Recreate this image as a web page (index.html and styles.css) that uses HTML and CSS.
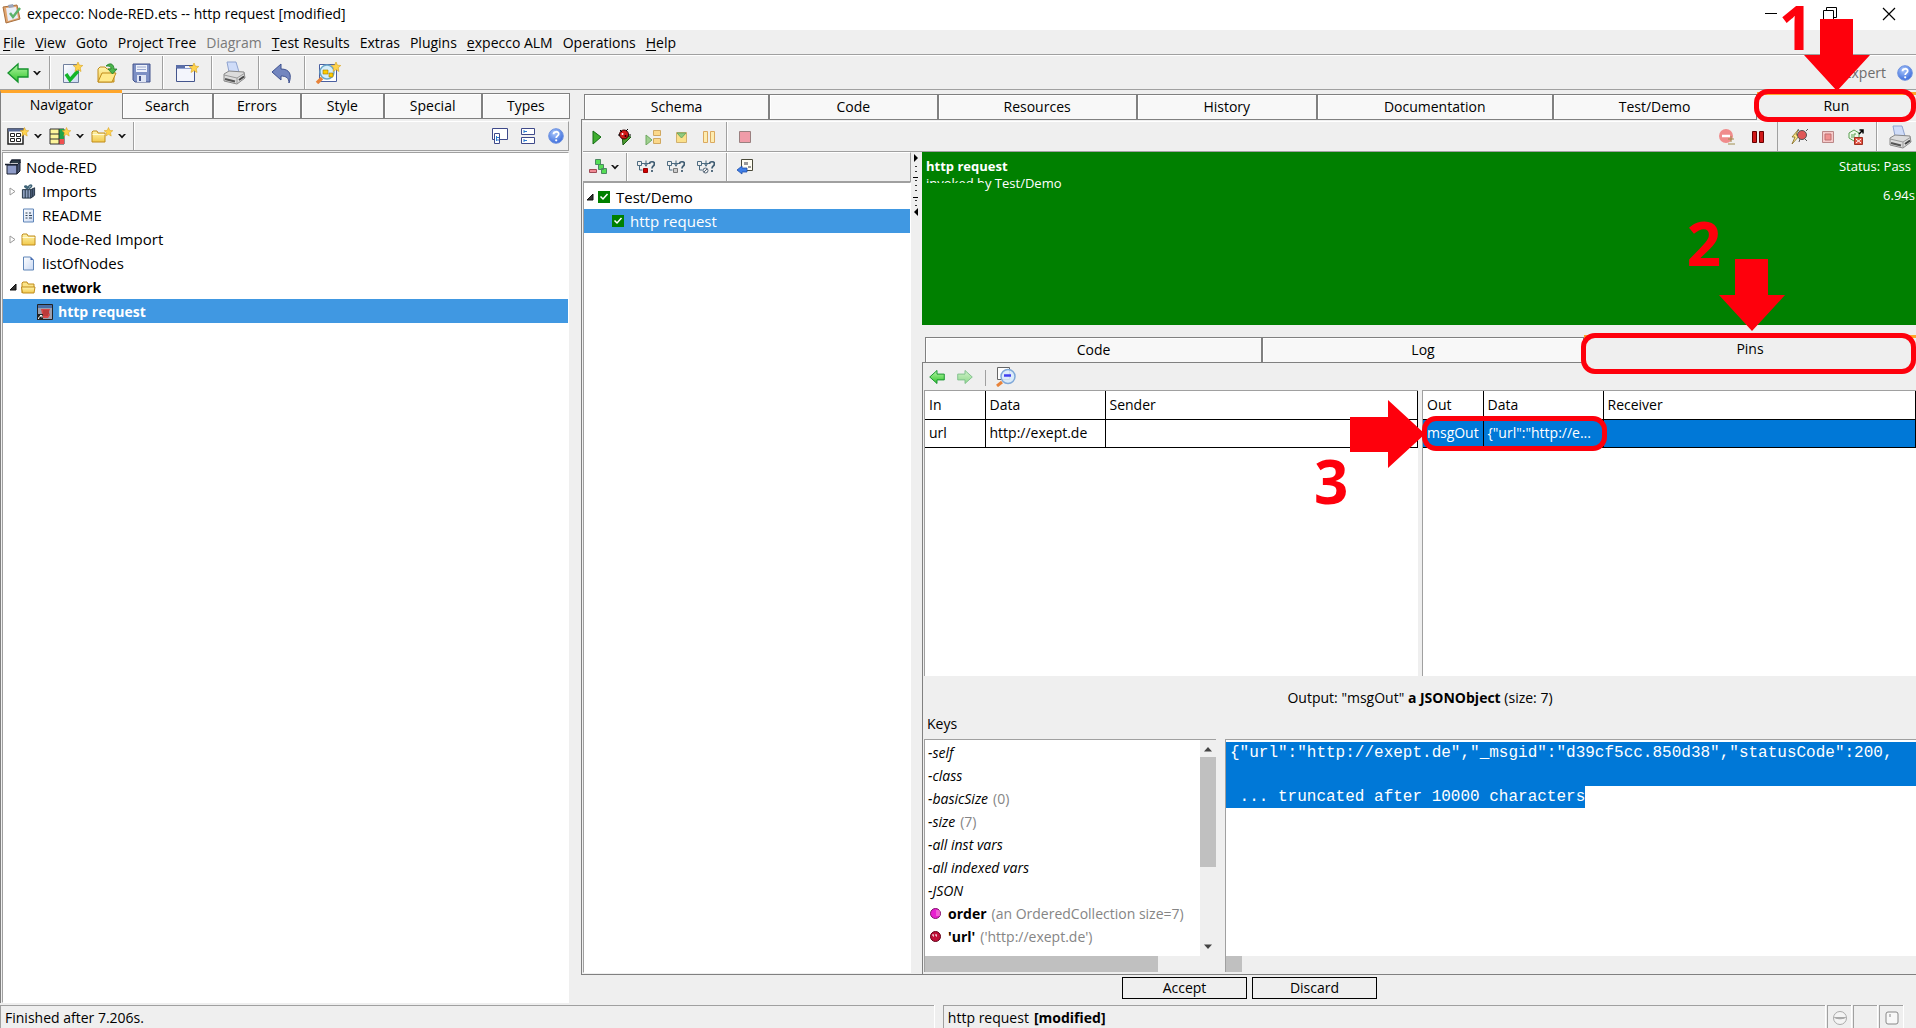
FILE: index.html
```html
<!DOCTYPE html>
<html lang="en">
<head>
<meta charset="utf-8">
<title>expecco: Node-RED.ets -- http request [modified]</title>
<link rel="stylesheet" href="styles.css">
</head>
<body>
<svg class="defs" aria-hidden="true">
  <defs>
    <linearGradient id="gGreen" x1="0" y1="0" x2="0" y2="1"><stop offset="0" stop-color="#b6f7a8"/><stop offset="1" stop-color="#2fc42a"/></linearGradient>
    <linearGradient id="gFolder" x1="0" y1="0" x2="0" y2="1"><stop offset="0" stop-color="#fff6b0"/><stop offset="1" stop-color="#f2c94c"/></linearGradient>
    <linearGradient id="gPage" x1="0" y1="0" x2="1" y2="1"><stop offset="0" stop-color="#ffffff"/><stop offset="1" stop-color="#c9d8f2"/></linearGradient>
    <radialGradient id="gHelp" cx=".4" cy=".3" r=".8"><stop offset="0" stop-color="#a9c6fb"/><stop offset="1" stop-color="#2f62d8"/></radialGradient>
    <symbol id="star" viewBox="0 0 10 10"><path d="M5 0l1.4 3.2 3.4.3-2.6 2.3.8 3.7L5 7.6 2 9.5l.8-3.7L.2 3.5l3.4-.3z" fill="#ffd34d" stroke="#d9a21b" stroke-width=".6"/></symbol>
    <symbol id="chev" viewBox="0 0 8 6"><path d="M0 1h2l2 2 2-2h2L4 5.500z" fill="#111"/></symbol>
    <symbol id="back" viewBox="0 0 22 20"><path d="M1 10L11 1v5h10v8H11v5z" fill="url(#gGreen)" stroke="#14922c" stroke-width="1.300"/></symbol>
    <symbol id="folder" viewBox="0 0 15 13"><path d="M1 12V2l1-1h4l1 2h7v9z" fill="url(#gFolder)" stroke="#c08c1c"/><path d="M1.500 4.500h12" stroke="#fffbd8"/></symbol>
    <symbol id="help" viewBox="0 0 16 16"><circle cx="8" cy="8" r="7.300" fill="url(#gHelp)" stroke="#6f93e0"/><path d="M5.500 6.200C5.500 3 10.700 3 10.700 6c0 1.900-2.500 1.900-2.500 4" fill="none" stroke="#fff" stroke-width="1.800"/><circle cx="8.200" cy="12.300" r="1.100" fill="#fff"/></symbol>
    <symbol id="printer" viewBox="0 0 24 24"><path d="M5 1h9l3 10H7z" fill="#cfdcf8" stroke="#8fa3cf"/><path d="M2 13l5-3 15 1 1 6-8 6-13-3z" fill="#dcdcdc" stroke="#888"/><path d="M2 14l13 3v5M15 17l8-5" fill="none" stroke="#999"/><path d="M3 18l10 2.500" stroke="#555" stroke-width="2"/><path d="M17 19l5-3.500" stroke="#444" stroke-width="2"/></symbol>
    <symbol id="check" viewBox="0 0 12 12"><path d="M0 0h12v12H0z" fill="#008000"/><path d="M2.500 5.500L5 8l4.500-5" fill="none" stroke="#fff" stroke-width="1.500"/></symbol>
    <symbol id="treeq" viewBox="0 0 18 14"><path d="M.5 1.500h4v4h-4zM2.500 6v4h3M5 3.500h8M9 .5v6M7 3l2 3 2-3" fill="none" stroke="#4d6b80"/><path d="M12.500 4c0-3 5-3 5 0 0 2-2.500 2-2.500 4.500M15 10v2" fill="none" stroke="#3d5a70" stroke-width="1.700"/></symbol>
    <symbol id="up" viewBox="0 0 8 5"><path d="M0 4.500L4 0l4 4.500z" fill="#444"/></symbol>
  </defs>
</svg>

<header>
  <div class="titlebar">
    <svg class="i20" viewBox="0 0 20 20"><path d="M1 3l14-2 3 14-14 4z" fill="#e2a56f" stroke="#a8703f"/><path d="M4 4l10-1 2 11-10 3z" fill="#e9eef8"/><path d="M6 1l5-1 1 3-5 1z" fill="#9aa5bb"/><path d="M8 9l3 4 7-9" fill="none" stroke="#5db36b" stroke-width="2.500"/></svg>
    <h1>expecco: Node-RED.ets -- http request [modified]</h1>
    <div class="winbtns">
      <button aria-label="Minimize"><svg viewBox="0 0 14 14"><path d="M1 6.500h12" stroke="#000"/></svg></button>
      <button aria-label="Restore"><svg viewBox="0 0 14 14"><path d="M.5 3.500h10v10H.5zM3.500 3V.5h10v10H11" fill="none" stroke="#000"/></svg></button>
      <button aria-label="Close"><svg viewBox="0 0 14 14"><path d="M1 1l12 12M13 1L1 13" stroke="#000" stroke-width="1.200"/></svg></button>
    </div>
  </div>
  <nav class="menubar">
    <button><u>F</u>ile</button><button><u>V</u>iew</button><button>Goto</button><button>Project Tree</button><button disabled>Diagram</button><button><u>T</u>est Results</button><button>Extras</button><button>Plugins</button><button><u>e</u>xpecco ALM</button><button>Operations</button><button><u>H</u>elp</button>
  </nav>
  <div class="toolbar main">
    <div class="grp g1"><button aria-label="Back"><svg class="i22"><use href="#back"/></svg></button><button aria-label="Back history"><svg class="chev"><use href="#chev"/></svg></button></div>
    <div class="grp g2">
      <button aria-label="New suite"><svg class="i22" viewBox="0 0 22 22"><path d="M2.500 2.500h15v18h-15z" fill="url(#gPage)" stroke="#70809f"/><path d="M5 12l4 6 8-9" fill="none" stroke="#12b52a" stroke-width="3.500"/><use href="#star" x="12" width="10" height="10"/></svg></button>
      <button aria-label="Open"><svg class="i22" viewBox="0 0 22 22"><path d="M2 20V7l2-2h5l2 2h7v13z" fill="url(#gFolder)" stroke="#c08c1c"/><path d="M2 20l4-9h14l-4 9z" fill="#ffe98a" stroke="#c08c1c"/><path d="M10 4c4-4 8-2 8 3h3l-4.500 5L12 7h3c0-3-2-3-5-3z" fill="#4cb54c" stroke="#1e7d2a" stroke-width=".8"/></svg></button>
      <button aria-label="Save"><svg class="i22" viewBox="0 0 22 22"><path d="M2 2h17v18H4l-2-2z" fill="#7d90c4" stroke="#44558d"/><path d="M5 3h11v7H5z" fill="#eef2fb"/><path d="M6 5h9M6 7.500h9" stroke="#9aa8cf"/><path d="M6 13h9v7H6z" fill="#dfe5f4"/><path d="M8 14h2v5H8z" fill="#44558d"/></svg></button>
    </div>
    <div class="grp g3"><button aria-label="New window"><svg class="i24" viewBox="0 0 24 22"><path d="M1.500 3.500h18v16h-18z" fill="#f3f5fc" stroke="#44558d"/><path d="M1 3h9v3H1z" fill="#5a6ea8"/><path d="M2 6.500h17" stroke="#8fa0cf"/><use href="#star" x="14" y="1" width="10" height="10"/></svg></button></div>
    <div class="grp g4"><button aria-label="Print"><svg class="i24"><use href="#printer"/></svg></button></div>
    <div class="grp g5"><button aria-label="Undo"><svg class="i22" viewBox="0 0 22 22"><path d="M1 10l9-8v5c9 0 11 6 8 14 0-5-3-7-8-7v4z" fill="#7386bf" stroke="#3f5290"/></svg></button></div>
    <div class="grp g6"><button aria-label="Find"><svg class="i26" viewBox="0 0 26 22"><path d="M4.500 2.500h17v17h-17z" fill="#fff" stroke="#4a5fa0"/><circle cx="12" cy="10" r="7" fill="#d5eefa" stroke="#6aa7c8" stroke-width="1.500"/><path d="M8 8h5v4H8zM14 11h4v4h-4z" fill="#ffcc00" stroke="#a07800" stroke-width=".6"/><path d="M7 16l-5 5" stroke="#e8833a" stroke-width="3.500"/><use href="#star" x="16" width="10" height="10"/></svg></button></div>
    <div class="expert"><span>Expert</span><button aria-label="Help"><svg class="i16"><use href="#help"/></svg></button></div>
  </div>
</header>

<main>
  <section class="left">
    <div class="tabs">
      <button class="tab on" style="flex-grow:123">Navigator</button><button class="tab" style="flex-grow:91">Search</button><button class="tab" style="flex-grow:88">Errors</button><button class="tab" style="flex-grow:82">Style</button><button class="tab" style="flex-grow:98">Special</button><button class="tab" style="flex-grow:88">Types</button>
    </div>
    <div class="navpage">
      <div class="toolbar sub">
        <div class="grp g7">
          <button aria-label="New block"><svg class="i24" viewBox="0 0 24 18"><path d="M1 2h15v15H1z" fill="#fff" stroke="#222" stroke-width="1.500"/><path d="M1 1.500h15v3H1z" fill="#5a6a94"/><path d="M3.500 6.500h4v3h-4zM9.500 6.500h4v3h-4zM3.500 11.500h4v3h-4zM9.500 11.500h4v3h-4z" fill="#fff" stroke="#222"/><use href="#star" x="13" width="9" height="10"/></svg></button><button aria-label="Block menu"><svg class="chev"><use href="#chev"/></svg></button>
          <button aria-label="New plan"><svg class="i24" viewBox="0 0 24 18"><path d="M1 2h14v15H1z" fill="#fdf59b" stroke="#333"/><path d="M10 2h5v10h-5z" fill="#1fa34a"/><path d="M10 12h5v5h-5z" fill="#f05050"/><path d="M1 7h9M1 12h9M10 2v15" stroke="#333"/><use href="#star" x="13" width="9" height="10"/></svg></button><button aria-label="Plan menu"><svg class="chev"><use href="#chev"/></svg></button>
          <button aria-label="New folder"><svg class="i24" viewBox="0 0 24 18"><use href="#folder" x="0" y="3" width="15" height="13"/><use href="#star" x="13" width="9" height="10"/></svg></button><button aria-label="Folder menu"><svg class="chev"><use href="#chev"/></svg></button>
        </div>
        <div class="endbtns">
          <button aria-label="Detach"><svg class="i16" viewBox="0 0 16 16"><path d="M.5.500h15v11H.5z" fill="#fff" stroke="#3f4a8a"/><path d="M2.500 5.500h5v10h-5z" fill="#fff" stroke="#3f4a8a"/><path d="M4.500 8v5M5 9.500h2M5 12h2" stroke="#2a7bd0"/></svg></button>
          <button aria-label="Split"><svg class="i16" viewBox="0 0 16 16"><path d="M1.500.5h13v6h-13zM1.500 9.500h13v6h-13z" fill="#fff" stroke="#3f4a8a"/><path d="M4 2v3M4 3.500h3M4 11v3M4 12.500h3" stroke="#2a7bd0"/></svg></button>
          <button aria-label="Navigator help"><svg class="i16"><use href="#help"/></svg></button>
        </div>
      </div>
      <ul class="tree">
        <li class="l0"><svg class="i16" viewBox="0 0 16 16"><path d="M2 6h10v9H2z" fill="#8f9cc8" stroke="#1c2333"/><path d="M12 6l3-3v9l-3 3z" fill="#46536e" stroke="#1c2333"/><path d="M0 5.500h13M5 4l2-3h8v3" fill="#2e3d46" stroke="#1c2333" stroke-width="1.500"/></svg>Node-RED</li>
        <li class="l1"><svg class="tog" viewBox="0 0 8 9"><path d="M1 1l5 3.500L1 8z" fill="#fff" stroke="#999"/></svg><svg class="i15" viewBox="0 0 15 16"><path d="M1 6h9v9H1z" fill="#8fa0c0" stroke="#1f3040"/><path d="M10 6l4-2v8l-4 3z" fill="#5d6d8d" stroke="#1f3040"/><path d="M4 6v9M7 6v9M12 5v9" stroke="#1f3040"/><path d="M7 5C1 3 4 0 7 4c2-5 7-3 1 1" fill="none" stroke="#3f6478" stroke-width="1.600"/></svg>Imports</li>
        <li class="l1"><i class="tog"></i><svg class="i15" viewBox="0 0 15 14"><path d="M2.500.5h10v13h-10z" fill="url(#gPage)" stroke="#5f85b8"/><path d="M4.500 4.500h2M8 4.500h2M4.500 7h2M8 7h3M4.500 9.500h2M8 9.500h3" stroke="#345"/></svg>README</li>
        <li class="l1"><svg class="tog" viewBox="0 0 8 9"><path d="M1 1l5 3.500L1 8z" fill="#fff" stroke="#999"/></svg><svg class="i15"><use href="#folder"/></svg>Node-Red Import</li>
        <li class="l1"><i class="tog"></i><svg class="i15" viewBox="0 0 15 14"><path d="M2.500.5h7l3 3v10h-10z" fill="url(#gPage)" stroke="#5f85b8"/><path d="M9.500.5v3h3z" fill="#3f66b0"/></svg>listOfNodes</li>
        <li class="l1 bold"><svg class="tog" viewBox="0 0 8 9"><path d="M7 1v6H1z" fill="#333" stroke="#111"/></svg><svg class="i15" viewBox="0 0 15 13"><path d="M1 12V2l1-1h4l1 2h6v3" fill="#fbe58a" stroke="#c08c1c"/><path d="M.5 6h13.500l-1 6H1.500z" fill="url(#gFolder)" stroke="#c08c1c"/></svg>network</li>
        <li class="l2 bold sel"><svg class="i16" viewBox="0 0 16 16"><path d="M.5.500h15v15H.5z" fill="#9a9fae" stroke="#222"/><path d="M1 1h14v3H1z" fill="#4a6ea5"/><path d="M4 5h9l-1 3 1 3-2 3H4l1-4z" fill="#d84848"/><path d="M6 7h6M6 9h6M6 11h5" stroke="#7a2020" stroke-width=".6"/><path d="M0 10h6v6H0z" fill="#222"/><path d="M1.500 15c0-2 1-2.500 3-3M3 11.500h2v2" fill="none" stroke="#fff"/></svg>http request</li>
      </ul>
    </div>
  </section>

  <section class="right">
    <div class="tabs rtabs">
      <button class="tab" style="flex-grow:185">Schema</button><button class="tab" style="flex-grow:168">Code</button><button class="tab" style="flex-grow:199">Resources</button><button class="tab" style="flex-grow:180">History</button><button class="tab" style="flex-grow:236">Documentation</button><button class="tab" style="flex-grow:204">Test/Demo</button>
      <div class="slot" style="flex-grow:161"><button class="tab on">Run</button>
        <span class="ring ring-run"></span><b class="num num-run">1</b>
        <svg class="arrow arrow-run" viewBox="0 0 66 72"><path d="M16 0h33v36h17L33 72 0 36h16z" fill="#fe000c"/></svg></div>
    </div>
    <div class="runpage">
      <div class="toolbar run">
        <div class="grp g8">
          <button aria-label="Run"><svg class="i16" viewBox="0 0 16 16"><path d="M4 2l8 6-8 7z" fill="#3fae2f" stroke="#126b12"/></svg></button>
          <button aria-label="Debug"><svg class="i16" viewBox="0 0 16 16"><path d="M5 6l9 2-8 8z" fill="#4a9b2f" stroke="#1c5a12"/><circle cx="7" cy="5.500" r="4.500" fill="#d01818" stroke="#300"/><path d="M3 1l2 2M11 0L9 2M1 6h2M11 6h3" stroke="#000"/><circle cx="5.500" cy="5" r="1" fill="#fff"/><circle cx="8.500" cy="7" r="1" fill="#200"/></svg></button>
          <button aria-label="Step" disabled><svg class="i16" viewBox="0 0 16 16"><path d="M1 6l6 5-6 5z" fill="#9fd08f" stroke="#6fa860"/><path d="M8.500 1.500h7v5h-7zM8.500 9.500h7v5h-7z" fill="#fbd88a" stroke="#d0a860"/></svg></button>
          <button aria-label="Step into" disabled><svg class="i16" viewBox="0 0 16 16"><path d="M3.500 3.500h10v10h-10z" fill="#fbe08a" stroke="#d0b070"/><path d="M4 4h9l-4.500 5z" fill="#8fca7f" stroke="#6fa860"/></svg></button>
          <button aria-label="Pause" disabled><svg class="i16" viewBox="0 0 16 16"><path d="M2.500 2.500h4v11h-4zM9.500 2.500h4v11h-4z" fill="#fdecb0" stroke="#dba95f"/></svg></button>
        </div>
        <button class="stop" aria-label="Stop" disabled><svg class="i16" viewBox="0 0 16 16"><path d="M2.500 2.500h11v11h-11z" fill="#f09ca8" stroke="#9a8080"/></svg></button>
        <div class="runend">
          <button aria-label="Remove breakpoints"><svg class="i18" viewBox="0 0 18 16"><circle cx="8" cy="7" r="7" fill="#f08c8c"/><path d="M4 7h8" stroke="#fff" stroke-width="2.500"/><path d="M10 10h6M13 7v6M10 15h7" stroke="#a09050"/></svg></button>
          <button aria-label="Break"><svg class="i16" viewBox="0 0 16 16"><path d="M2.500 2.500h4v11h-4zM9.500 2.500h4v11h-4z" fill="#d01818" stroke="#600"/></svg></button>
          <div class="grp g9">
            <button aria-label="Exception break"><svg class="i18" viewBox="0 0 18 16"><path d="M8 1L2 8h3l-3 7 8-9H6z" fill="#ffe98a" stroke="#806a20" stroke-width=".8"/><circle cx="12" cy="6" r="4.500" fill="#e05858" stroke="#555"/><path d="M9 2l-1-2M16 2l2-2M10 10l-1 3M15 10l2 2" stroke="#555"/></svg></button>
            <button aria-label="Halt"><svg class="i16" viewBox="0 0 16 16"><path d="M2.500 2.500h11v11h-11z" fill="#f6caca" stroke="#b88"/><path d="M5 5h6v6H5z" fill="#f09090" stroke="#c07070"/></svg></button>
            <button aria-label="Close connection"><svg class="i16" viewBox="0 0 16 16"><path d="M6 1l5 3v5l-5 3-5-3V4z" fill="#eef8ea" stroke="#58a050"/><path d="M4 5v4M8 5H6v4h2" fill="none" stroke="#58a050"/><path d="M6.500 8.500h8v7h-8z" fill="#e05040" stroke="#a03020"/><path d="M8 10l5 4M13 10l-5 4" stroke="#fff"/><path d="M11 5l4-4M11.500 1H15v3.500" fill="none" stroke="#000" stroke-width="1.500"/></svg></button>
          </div>
          <button class="print" aria-label="Print report"><svg class="i24"><use href="#printer"/></svg></button>
        </div>
      </div>
      <div class="runbody">
        <div class="steps">
          <div class="toolbar steptools">
            <div class="grp g10"><button aria-label="Collapse"><svg class="i18" viewBox="0 0 18 16"><path d="M.5 10.500h7v3h-7z" fill="#f08a94" stroke="#a04a55"/><path d="M6.500.5h5v5h-5zM9.500 5.500h5v5h-5zM12.500 9.500h5v5h-5z" fill="#55dd55" stroke="#4a8a60"/></svg></button><button aria-label="Collapse menu"><svg class="chev"><use href="#chev"/></svg></button></div>
            <div class="grp g11">
              <button aria-label="Find failed"><svg class="i18" viewBox="0 0 18 14"><use href="#treeq" width="18" height="14"/><path d="M6.500 8.500h4v4h-4z" fill="#d00000" stroke="#900"/></svg></button>
              <button aria-label="Find next"><svg class="i18" viewBox="0 0 18 14"><use href="#treeq" width="18" height="14"/><path d="M6.500 8.500h4v4h-4z" fill="#ccc" stroke="#777"/></svg></button>
              <button aria-label="Find skipped"><svg class="i18" viewBox="0 0 18 14"><use href="#treeq" width="18" height="14"/><circle cx="8.500" cy="10.500" r="2.500" fill="#eee" stroke="#567"/><path d="M7 12l3-3" stroke="#567"/></svg></button>
            </div>
            <button class="goto" aria-label="Show in editor"><svg class="i16" viewBox="0 0 16 16"><path d="M4.500.5h11v11h-11z" fill="#fffdf2" stroke="#4a4a3a"/><path d="M7 3h4v3H7zM11 7h3v2h-3z" fill="#999"/><path d="M0 11l5-4v2h5v4H5v2z" fill="#3f7fe8" stroke="#1f4fa8" stroke-width=".8"/></svg></button>
          </div>
          <ul class="tree">
            <li class="s0"><svg class="tog" viewBox="0 0 8 9"><path d="M7 1v6H1z" fill="#333" stroke="#111"/></svg><svg class="i12"><use href="#check"/></svg>Test/Demo</li>
            <li class="s1 sel"><svg class="i12"><use href="#check"/></svg>http request</li>
          </ul>
        </div>
        <div class="grip"><svg viewBox="0 0 6 64"><path d="M1 0v8l4-4zM5 54v8l-4-4z" fill="#000"/><path d="M3 12v8M3 26v14M3 46v8" stroke="#333" stroke-width="2" stroke-dasharray="1 4"/><path d="M0 23.500h5M0 43.500h5" stroke="#000"/></svg></div>
        <div class="detail">
          <div class="status">
            <div><b>http request</b><p><span class="cut">invoked b</span>y Test/Demo</p></div>
            <div class="result"><span>Status: Pass</span><span>6.94s</span></div>
          </div>
          <div class="tabs ptabs">
            <button class="tab" style="flex-grow:336">Code</button><button class="tab" style="flex-grow:321">Log</button>
            <div class="slot" style="flex-grow:333"><button class="tab on">Pins</button>
              <span class="ring ring-pins"></span><b class="num num-pins">2</b>
              <svg class="arrow arrow-pins" viewBox="0 0 66 72"><path d="M16 0h33v36h17L33 72 0 36h16z" fill="#fe000c"/></svg></div>
          </div>
          <div class="pinpage">
            <div class="pintools"><button aria-label="Previous"><svg class="i16"><use href="#back"/></svg></button><button aria-label="Next" disabled><svg class="i16 flip"><use href="#back"/></svg></button><i class="vsep"></i><button aria-label="Inspect"><svg class="i20" viewBox="0 0 20 20"><path d="M1.500.5h12v12h-12z" fill="#fff" stroke="#666"/><circle cx="12" cy="9.500" r="7" fill="#d8eafa" fill-opacity=".9" stroke="#7fa8d8" stroke-width="1.500"/><path d="M8 8.500h7" stroke="#4040f0" stroke-width="2.500"/><path d="M6 15l-5 4" stroke="#e8833a" stroke-width="3"/></svg></button></div>
            <div class="tables">
              <div class="tbox"><table><colgroup><col class="c1"><col class="c2"><col></colgroup><thead><tr><th>In</th><th>Data</th><th>Sender</th></tr></thead><tbody><tr><td>url</td><td>http://exept.de</td><td></td></tr></tbody></table></div>
              <div class="tbox out"><table><colgroup><col class="c1"><col class="c2"><col></colgroup><thead><tr><th>Out</th><th>Data</th><th>Receiver</th></tr></thead><tbody><tr><td>msgOut</td><td>{"url":"http://e...</td><td></td></tr></tbody></table>
                <span class="ring ring-out"></span><b class="num num-out">3</b>
                <svg class="arrow arrow-out" viewBox="0 0 75 68"><path d="M0 17h38V0l37 34-37 34V52H0z" fill="#fe000c"/></svg></div>
            </div>
            <p class="outlabel">Output: "msgOut" <b>a JSONObject</b> (size: 7)</p>
            <p class="keyslabel">Keys</p>
            <div class="inspect">
              <div class="keys">
                <ul>
                  <li><i>-self</i></li><li><i>-class</i></li><li><i>-basicSize</i> <span>(0)</span></li><li><i>-size</i> <span>(7)</span></li><li><i>-all inst vars</i></li><li><i>-all indexed vars</i></li><li><i>-JSON</i></li>
                  <li><svg class="dot" viewBox="0 0 11 11"><circle cx="5.500" cy="5.500" r="5" fill="#e81fd0" stroke="#80106a"/><path d="M6 3h4M6 5h4M6 7h4" stroke="#fbd" stroke-width=".8"/></svg><b>order</b> <span>(an OrderedCollection size=7)</span></li>
                  <li><svg class="dot" viewBox="0 0 11 11"><circle cx="5.500" cy="5.500" r="5" fill="#c01038" stroke="#600018"/><path d="M3 3v2h1M6 3v2h1" fill="none" stroke="#fff"/></svg><b>'url'</b> <span>('http://exept.de')</span></li>
                </ul>
                <div class="vscroll"><svg><use href="#up"/></svg><i></i><svg class="down"><use href="#up"/></svg></div>
                <div class="hscroll"><i></i></div>
              </div>
              <div class="value">
                <div class="code"><p class="full">{"url":"http://exept.de","_msgid":"d39cf5cc.850d38","statusCode":200,</p><p class="full"></p><p><mark> ... truncated after 10000 characters</mark></p></div>
                <div class="hscroll"><i></i></div>
              </div>
            </div>
          </div>
        </div>
      </div>
    </div>
    <div class="actions"><button>Accept</button><button>Discard</button></div>
  </section>
</main>

<footer>
  <div class="f1">Finished after 7.206s.</div>
  <div class="f2">http request <b>[modified]</b></div>
  <div class="fi"><svg class="i16" viewBox="0 0 16 16"><circle cx="8" cy="8" r="6.500" fill="#f4f4f4" stroke="#aaa"/><path d="M2 7h12c0 3-12 3-12 0z" fill="#aaa"/></svg></div>
  <div class="fi"></div>
  <div class="fi"><svg class="i16" viewBox="0 0 16 16"><rect x="2" y="2" width="12" height="12" rx="2" fill="#f8f8f8" stroke="#888"/><path d="M6 4v3" stroke="#888"/></svg></div>
</footer>
</body>
</html>
```
FILE: styles.css
```css
* { box-sizing: border-box; }
body { margin: 0; min-height: 100vh; display: flex; flex-direction: column; overflow: hidden; background: #efefef; color: #000; font: 14px/18px "Open Sans", "Noto Sans", sans-serif; }
h1, p, ul { margin: 0; padding: 0; font-size: inherit; font-weight: 400; }
ul { list-style: none; }
button { display: flex; align-items: center; justify-content: center; margin: 0; padding: 0; border: 0; background: none; color: inherit; font: inherit; }
svg { display: block; flex: none; }
.defs { position: absolute; width: 0; height: 0; }
.i12 { width: 12px; height: 12px; }
.i15 { width: 15px; height: 15px; }
.i16 { width: 16px; height: 16px; }
.i18 { width: 18px; height: 16px; }
.i20 { width: 20px; height: 20px; }
.i22 { width: 22px; height: 22px; }
.i24 { width: 24px; height: 24px; }
.i26 { width: 26px; height: 22px; }
.chev { width: 8px; height: 6px; }
.flip { transform: scaleX(-1); opacity: .5; }

/* window frame */
.titlebar { display: flex; align-items: center; gap: 5px; height: 30px; padding: 0 20px 2px 2px; background: #fff; }
.winbtns { display: flex; gap: 45px; margin-left: auto; }
.winbtns svg { width: 14px; height: 14px; }
.menubar { display: flex; gap: 10px; height: 25px; padding: 1px 3px 0; border-bottom: 1px solid #a0a0a0; }
.menubar button:disabled { color: #7a7a7a; }
.menubar u { text-underline-offset: 2px; }
.toolbar { display: flex; align-items: stretch; border-top: 1px solid #fff; border-bottom: 1px solid #a0a0a0; }
.toolbar.main { height: 35px; }
.grp { display: flex; align-items: center; border-right: 1px solid #a0a0a0; box-shadow: 1px 0 #fff; }
.g1 { width: 50px; padding-left: 7px; gap: 4px; }
.g2 { width: 113px; padding-left: 11px; gap: 13px; }
.g3 { width: 49px; justify-content: center; }
.g4 { width: 47px; padding-left: 10px; }
.g5 { width: 46px; justify-content: center; }
.g6 { border: 0; box-shadow: none; padding-left: 10px; }
.expert { display: flex; align-items: center; gap: 11px; margin-left: auto; padding-right: 3px; color: #6d6d6d; }

main { flex: 1; display: grid; grid-template-columns: minmax(0, 570fr) 11px minmax(0, 1335fr); }
.left { display: flex; flex-direction: column; }
.right { grid-column: 3; display: flex; flex-direction: column; }

/* tabs */
.tabs { display: flex; align-items: flex-end; }
.tab { flex: 1 1 0; height: 25px; border: 1px solid #808080; border-width: 1px 1px 0; background: #f8f8f8; box-shadow: inset 1px 1px #fff; }
.tab.on { height: 28px; border: 0; border-top: 3px solid #ffa62b; background: #efefef; box-shadow: none; padding-bottom: 3px; }
.slot { flex: 1 1 0; position: relative; }
.slot .tab { width: 100%; }
.left .tabs { height: 29px; border-bottom: 1px solid #808080; }
.left .tab.on { height: 29px; margin-bottom: -1px; border-left: 1px solid #808080; }
.rtabs { height: 29px; padding-left: 3px; }
.ptabs { height: 37px; padding-left: 3px; }
.rtabs .tab.on, .ptabs .tab.on { margin-bottom: -1px; }

/* navigator */
.navpage { flex: 1; display: flex; flex-direction: column; padding: 2px 1px 0 1px; border-left: 1px solid #808080; }
.toolbar.sub { height: 30px; margin-bottom: 1px; border-right: 1px solid #a0a0a0; }
.g7 { width: 132px; padding-left: 5px; gap: 3px; }
.g7 .chev { margin-right: 4px; }
.endbtns { display: flex; gap: 12px; margin-left: auto; padding-right: 4px; }
.tree { flex: 1; border: 1px solid #a0a0a0; border-right-color: #fff; border-bottom-color: #fff; background: #fff; padding-top: 2px; font-size: 15px; }
.tree li { display: flex; align-items: center; height: 24px; }
.tog { width: 8px; height: 9px; flex: none; margin-right: 4px; }
.l0 { padding-left: 2px; gap: 5px; }
.l1 { padding-left: 6px; }
.l1 .i15 { margin-right: 6px; }
.l2 { padding-left: 34px; gap: 5px; }
.bold { font-weight: 700; font-size: 14px; }
.tree .bold { line-height: 20px; padding-top: 1px; }
.sel { background: #4098e2; color: #fff; }

/* run page */
.runpage { flex: 1; display: flex; flex-direction: column; padding: 1px 0 0 1px; border: 1px solid #808080; border-right: 0; }
.toolbar.run { height: 31px; }
.g8 { width: 144px; padding-left: 6px; gap: 12px; }
.stop { margin-left: 10px; }
.runend { display: flex; margin-left: auto; gap: 14px; }
.g9 { padding: 0 12px; gap: 12px; border-left: 1px solid #a0a0a0; margin: 0 -3px; }
.print { padding-right: 4px; }
.runbody { flex: 1; display: grid; grid-template-columns: minmax(0, 328fr) 11px minmax(0, 994fr); }
.steps { display: flex; flex-direction: column; padding-bottom: 1px; }
.toolbar.steptools { height: 30px; border-right: 1px solid #a0a0a0; }
.g10 { width: 44px; padding-left: 6px; gap: 4px; }
.g11 { width: 100px; padding-left: 10px; gap: 12px; }
.goto { margin-left: 10px; }
.s0 { padding-left: 2px; }
.s0 .i12 { margin-right: 6px; }
.s1 { padding-left: 28px; gap: 6px; }
.grip { padding: 2px 0 0 2px; }
.grip svg { width: 6px; height: 64px; }
.detail { display: flex; flex-direction: column; }
.status { display: flex; justify-content: space-between; height: 173px; padding: 6px 1px 0 4px; background: #008000; color: #fff; font-size: 13px; line-height: 17px; }
.cut { display: inline-block; clip-path: inset(0 0 9px 0); }
.result { display: flex; flex-direction: column; align-items: flex-end; gap: 12px; }
.result span:first-child { padding-right: 4px; }
.pinpage { flex: 1; display: flex; flex-direction: column; padding: 0 0 2px 1px; border: 1px solid #808080; border-width: 1px 0 0 1px; }
.pintools { display: flex; align-items: center; gap: 12px; height: 27px; padding-left: 5px; }
.vsep { width: 1px; height: 16px; margin: 2px -2px 0 0; background: #a0a0a0; }
.tables { flex: 1; display: grid; grid-template-columns: minmax(0, 494fr) 4px minmax(0, 494fr); min-height: 285px; }
.tbox { background: #fff; border: 1px solid #a0a0a0; border-width: 1px 0 0 1px; }
.out { grid-column: 3; position: relative; }
table { width: 100%; table-layout: fixed; border-collapse: collapse; border-right: 1px solid #000; }
.c1 { width: 60px; }
.c2 { width: 120px; }
th, td { height: 28px; padding: 0 4px; border: 1px solid #000; border-top: 0; text-align: left; font-weight: 400; white-space: nowrap; }
th:first-child, td:first-child { border-left: 0; }
.out tbody { background: #0078d7; color: #fff; }
.outlabel { padding-top: 13px; text-align: center; }
.keyslabel { padding: 8px 3px 6px; }
.inspect { display: grid; grid-template-columns: minmax(0, 292fr) 9px minmax(0, 691fr); }
.keys { display: grid; grid-template-columns: minmax(0, 1fr) 16px; grid-template-rows: 216px 16px; border: 1px solid #a0a0a0; border-width: 1px 0 0 1px; }
.keys ul { padding-top: 1px; background: #fff; overflow: hidden; }
.keys li { display: flex; align-items: center; gap: 5px; height: 23px; padding-left: 3px; white-space: nowrap; }
.keys li span { color: #858585; }
.dot { width: 11px; height: 11px; margin: 0 2px; }
.vscroll { display: flex; flex-direction: column; align-items: center; padding: 7px 0; }
.vscroll svg { width: 8px; height: 5px; }
.vscroll i { width: 100%; height: 110px; margin: 5px 0 auto; background: #c0c0c0; }
.down { transform: scaleY(-1); }
.hscroll { grid-column: 1 / -1; display: flex; background: #efefef; }
.hscroll i { background: #c0c0c0; }
.keys .hscroll i { width: 80%; }
.value { grid-column: 3; display: grid; grid-template-rows: 216px 16px; border: 1px solid #a0a0a0; border-width: 1px 0 0 1px; }
.value .hscroll i { width: 16px; }
.code { padding-top: 2px; background: #fff; overflow: hidden; font: 16px/22px "Liberation Mono", monospace; white-space: pre; }
.code p { height: 22px; }
.code .full { padding-left: 4px; background: #0078d7; color: #fff; }
.code mark { display: inline-block; padding-left: 4px; background: #0078d7; color: #fff; }
.actions { display: flex; justify-content: center; gap: 5px; height: 28px; padding: 2px 0 4px 2px; }
.actions button { width: 125px; border: 1px solid #000; }

/* status bar */
footer { display: flex; height: 25px; padding: 2px 13px 0 0; gap: 2px; }
footer > div { display: flex; align-items: center; gap: 5px; padding: 2px 0 0 4px; border: 1px solid #a0a0a0; border-width: 1px 0 0 1px; box-shadow: 1px 0 #fff; }
.f1 { flex: 934 1 0; margin-right: 7px; }
.f2 { flex: 882 1 0; }
.fi { width: 24px; }

/* callouts laid over the window */
.ring { position: absolute; z-index: 2; border: 5px solid #fe000c; border-radius: 14px; }
.num { position: absolute; z-index: 3; color: #fe000c; font-size: 60px; line-height: 60px; font-weight: 700; }
.arrow { position: absolute; z-index: 2; }
.ring-run { left: -3px; right: 0; top: -3px; height: 33px; }
.arrow-run { right: 46px; bottom: 28px; width: 66px; height: 72px; }
.num-run { right: 103px; bottom: 62px; }
.ring-pins { left: -3px; right: 0; top: -2px; height: 41px; }
.arrow-pins { right: 131px; bottom: 30px; width: 66px; height: 74px; }
.num-pins { right: 195px; bottom: 89px; }
.ring-out { left: -1px; top: 25px; width: 185px; height: 35px; }
.arrow-out { left: -73px; top: 9px; width: 75px; height: 68px; }
.num-out { left: -109px; top: 60px; }
```
